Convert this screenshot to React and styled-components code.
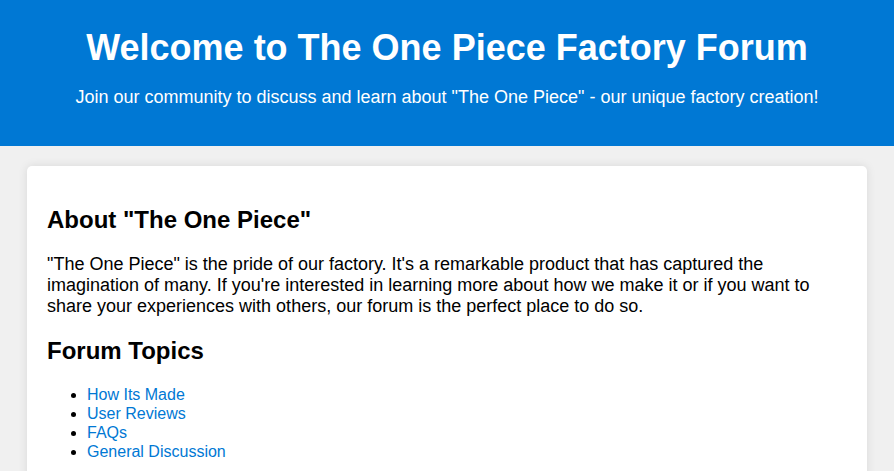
import React from "react";
import styled, { createGlobalStyle } from "styled-components";

const Global = createGlobalStyle`
  html, body { margin: 0; padding: 0; }
  body {
    background: #f0f0f0;
    font-family: "Liberation Sans", Arial, sans-serif;
    color: #000;
  }
`;

const Header = styled.header`
  background: #0078d4;
  color: #fff;
  text-align: center;
  padding: 27px 20px 20px;
`;

const Title = styled.h1`
  margin: 0 0 18px;
  font-size: 36px;
  font-weight: bold;
`;

const Subtitle = styled.p`
  margin: 0 0 18px;
  font-size: 18px;
`;

const Card = styled.main`
  max-width: 800px;
  margin: 20px auto;
  padding: 20px;
  background: #fff;
  border-radius: 5px;
  box-shadow: 0 0 10px rgba(0, 0, 0, 0.1);
`;

const SectionTitle = styled.h2`
  font-size: 24px;
  margin: 20px 0;
  line-height: 28px;
`;

const Text = styled.p`
  font-size: 18px;
  margin: 18px 0;
`;

const TopicList = styled.ul`
  font-size: 16px;
  line-height: 19px;
  margin: 16px 0;
  padding-left: 40px;
`;

const TopicLink = styled.a`
  color: #0078d4;
  text-decoration: none;
`;

const topics = ["How Its Made", "User Reviews", "FAQs", "General Discussion"];

export default function App() {
  return (
    <>
      <Global />
      <Header>
        <Title>Welcome to The One Piece Factory Forum</Title>
        <Subtitle>
          Join our community to discuss and learn about "The One Piece" - our unique factory creation!
        </Subtitle>
      </Header>
      <Card>
        <SectionTitle>About "The One Piece"</SectionTitle>
        <Text>
          "The One Piece" is the pride of our factory. It's a remarkable product that has captured the
          imagination of many. If you're interested in learning more about how we make it or if you want to
          share your experiences with others, our forum is the perfect place to do so.
        </Text>
        <SectionTitle>Forum Topics</SectionTitle>
        <TopicList>
          {topics.map((t) => (
            <li key={t}>
              <TopicLink href="#">{t}</TopicLink>
            </li>
          ))}
        </TopicList>
      </Card>
    </>
  );
}
